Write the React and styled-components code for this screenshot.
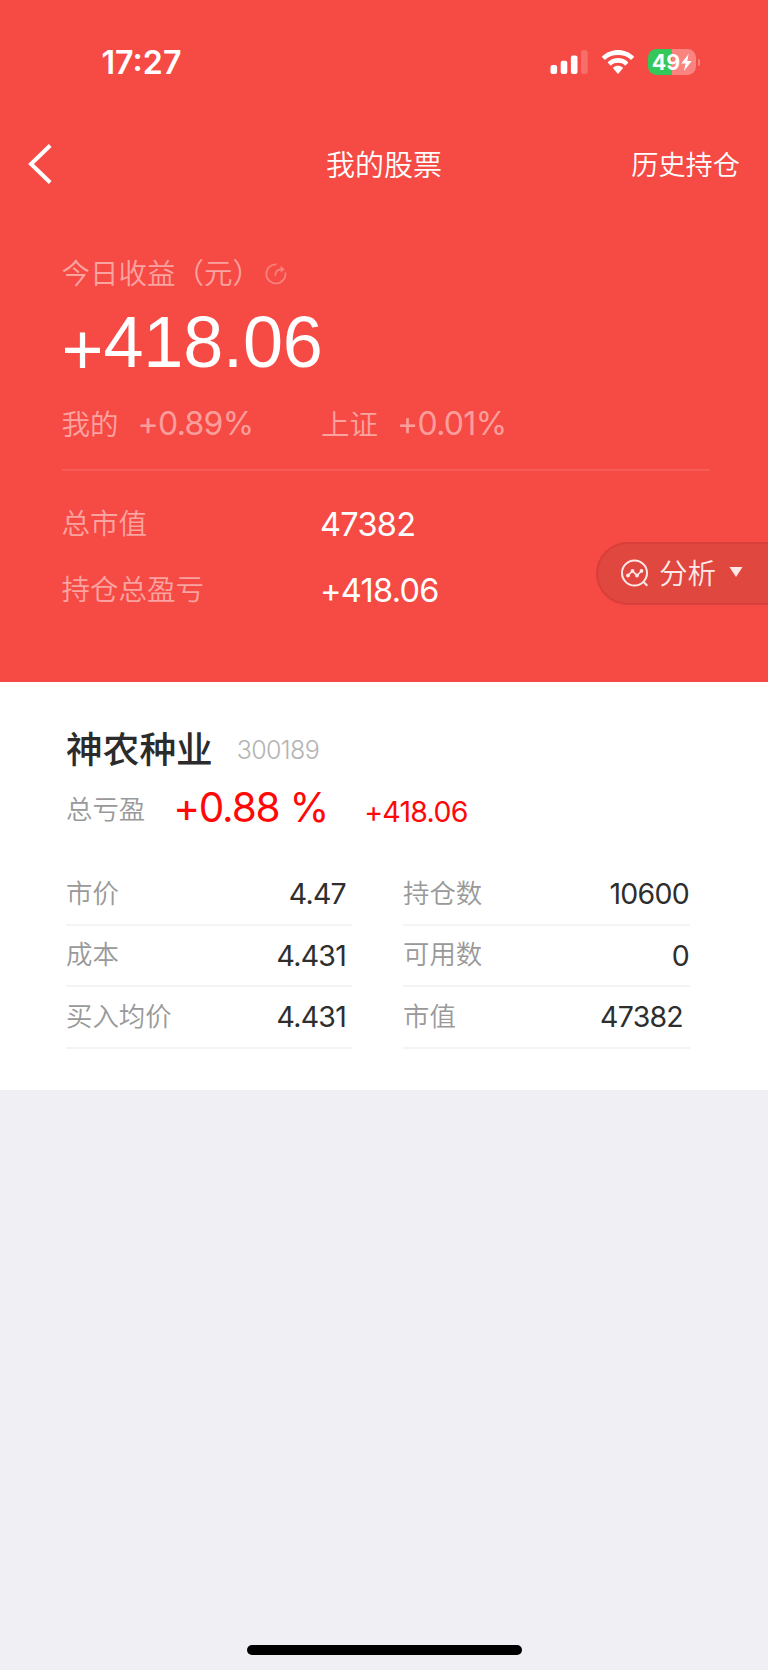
import styled, { createGlobalStyle } from "styled-components";

const cjk = `"Noto Sans CJK SC", sans-serif`;
const latin = `Inter, "Noto Sans CJK SC", sans-serif`;

const GlobalStyle = createGlobalStyle`
  * {
    box-sizing: border-box;
  }
  body {
    margin: 0;
    background-color: #efeff4;
    -webkit-font-smoothing: antialiased;
  }
`;

const Screen = styled.div`
  display: flex;
  flex-direction: column;
  width: 768px;
  height: 1670px;
  background-color: #efeff4;
  font-family: ${latin};
`;

const Header = styled.header`
  position: relative;
  height: 682px;
  background-color: #f64a45;
  color: white;
`;

const StatusBar = styled.div`
  display: flex;
  align-items: center;
  justify-content: space-between;
  height: 124px;
  padding: 0 68px 0 101.5px;
`;

const Time = styled.div`
  padding-top: 1px;
  font-size: 32.2px;
  font-weight: 600;
`;

const StatusIcons = styled.div`
  display: flex;
  align-items: center;
`;

const SignalIcon = styled.svg`
  margin-right: 14px;
`;

const WifiIcon = styled.svg`
  margin-right: 14px;
`;

const Battery = styled.div`
  display: flex;
  align-items: center;
  justify-content: center;
  gap: 1px;
  width: 48px;
  height: 26px;
  border-radius: 8.5px;
  background: linear-gradient(to right, #34c759 50%, #fa8480 50%);
  font-size: 21.5px;
  font-weight: 700;
  line-height: 26px;
`;

const BatteryTip = styled.div`
  width: 2px;
  height: 7px;
  margin-left: 2px;
  border-radius: 0 2px 2px 0;
  background-color: #fa8480;
`;

const NavBar = styled.nav`
  display: grid;
  grid-template-columns: 1fr auto 1fr;
  align-items: center;
  height: 79px;
  padding: 0 28px;
  font-family: ${cjk};
`;

const Title = styled.h1`
  margin: 0;
  padding-bottom: 1px;
  font-size: 29px;
  font-weight: 350;
  line-height: 40px;
`;

const HistoryLink = styled.div`
  justify-self: end;
  padding-bottom: 1px;
  font-size: 27.2px;
  font-weight: 350;
  line-height: 40px;
`;

const Summary = styled.section`
  padding: 49px 58px 0 61.5px;
`;

const SummaryLabel = styled.div`
  padding-bottom: ${(props) => props.$lift || 0}px;
  color: rgba(255, 255, 255, 0.5);
  font-family: ${cjk};
  font-size: 28.5px;
  font-weight: 350;
  line-height: 40px;
`;

const TodayRow = styled.div`
  display: flex;
  align-items: center;
  height: 40px;
`;

const RefreshIcon = styled.svg`
  margin: 4px 0 0 4px;
`;

const TodayProfit = styled.div`
  height: 99px;
  font-family: "Liberation Sans", Arial, sans-serif;
  font-size: 72px;
  line-height: 101px;
  letter-spacing: -0.15px;
`;

const BigPlus = styled.span`
  vertical-align: -7px;
  line-height: 1;
`;

const Columns = styled.div`
  display: grid;
  grid-template-columns: 259.5px 1fr;
  align-items: center;
  height: ${(props) => props.$height}px;
`;

const Rate = styled.div`
  display: flex;
  align-items: center;
  gap: 19px;
`;

// keeps the plus sign at its low position next to digits
const Figure = styled.span`
  font-variant-ligatures: no-contextual;
  font-feature-settings: "calt" 0;
`;

const RateValue = styled(Figure)`
  color: rgba(255, 255, 255, 0.48);
  font-size: 32px;
  letter-spacing: -0.7px;
`;

const Divider = styled.div`
  height: 2px;
  margin: 13.5px 0 21.5px;
  background-color: #f85c57;
`;

const SummaryValue = styled(Figure)`
  margin-left: -1px;
  font-size: 32.5px;
  letter-spacing: -0.7px;
`;

const AnalysisButton = styled.div`
  position: absolute;
  top: 542px;
  right: 0;
  display: flex;
  align-items: center;
  width: 172px;
  height: 63px;
  padding-left: 22px;
  border: 2px solid #d83f3b;
  border-right: 0;
  border-radius: 31.5px 0 0 31.5px;
  background-color: #df473f;
`;

const AnalysisText = styled.span`
  margin: 0 13px 4px 9px;
  color: rgba(255, 255, 255, 0.9);
  font-family: ${cjk};
  font-size: 28.6px;
  font-weight: 350;
  line-height: 40px;
`;

const Card = styled.section`
  height: 408px;
  padding: 43px 78px 0 66px;
  background-color: white;
`;

const NameRow = styled.div`
  display: flex;
  align-items: center;
  height: 44px;
`;

const StockName = styled.h2`
  margin: 0 24px 0 0;
  color: #2b2b2b;
  font-family: ${cjk};
  font-size: 36.7px;
  font-weight: 500;
  line-height: 44px;
`;

const StockCode = styled(Figure)`
  padding-top: 6px;
  color: #b4b4b4;
  font-size: 25px;
  font-weight: 300;
  letter-spacing: -0.65px;
`;

const TotalRow = styled.div`
  display: flex;
  align-items: center;
  height: 75px;
  color: #fe0808;
`;

const GrayLabel = styled.span`
  padding-bottom: ${(props) => props.$lift || 0}px;
  padding-top: ${(props) => props.$drop || 0}px;
  color: #999;
  font-family: ${cjk};
  font-size: 26.4px;
  font-weight: 350;
  line-height: 40px;
`;

const TotalPercent = styled(Figure)`
  margin: 0 36px 0 28px;
  padding-top: 2px;
  font-size: 40.5px;
  letter-spacing: -1.2px;
`;

const TotalAmount = styled(Figure)`
  padding-top: 9px;
  font-size: 28.5px;
  letter-spacing: -0.7px;
`;

const Details = styled.div`
  display: grid;
  grid-template-columns: 286px 287px;
  justify-content: space-between;
  margin-top: 20px;
`;

const DetailRow = styled.div`
  display: flex;
  align-items: center;
  justify-content: space-between;
  height: 61.6px;
  padding-right: ${(props) => props.$inset}px;
  border-bottom: 2px solid #f4f4f4;
`;

const DetailValue = styled(Figure)`
  color: #2e2e2e;
  font-size: 28.5px;
  letter-spacing: -0.75px;
`;

const HomeIndicator = styled.div`
  width: 275px;
  height: 10px;
  margin: auto 0 15.5px 246.5px;
  border-radius: 5px;
  background-color: black;
`;

const details = [
  { label: "市价", value: "4.47", inset: 6 },
  { label: "持仓数", value: "10600", inset: 1 },
  { label: "成本", value: "4.431", inset: 6 },
  { label: "可用数", value: "0", inset: 1 },
  { label: "买入均价", value: "4.431", inset: 6 },
  { label: "市值", value: "47382", inset: 7 },
];

const Signal = () => (
  <SignalIcon width="38" height="24" viewBox="0 0 38 24" fill="white">
    <rect x="0.5" y="15" width="6.6" height="9" rx="2" />
    <rect x="10.7" y="10.8" width="6.6" height="13.2" rx="2" />
    <rect x="20.9" y="5.4" width="6.6" height="18.6" rx="2" />
    <rect x="31.1" y="0.2" width="6.6" height="23.8" rx="2" opacity="0.2" />
  </SignalIcon>
);

const Wifi = () => (
  <WifiIcon width="32" height="24" viewBox="0 0 32 24" fill="white">
    <path d="M16 0C9.900 0 4.300 2.400.200 6.300c-.300.300-.300.700 0 1l2.200 2.200c.300.300.700.300 1 0C6.700 6.400 11.100 5 16 5s9.300 1.400 12.600 4.500c.300.300.700.300 1 0l2.200-2.200c.300-.300.300-.700 0-1C27.700 2.400 22.100 0 16 0z" />
    <path d="M16 8c-3.900 0-7.400 1.500-10 3.900-.300.300-.300.700 0 1l2.300 2.300c.300.300.700.300 1 0 1.800-1.600 4.100-2.400 6.700-2.400s4.900.800 6.700 2.400c.300.300.700.300 1 0l2.300-2.300c.300-.300.300-.700 0-1C23.400 9.500 19.900 8 16 8z" />
    <path d="M16 15.800c-1.900 0-3.500.600-4.700 1.600-.300.300-.300.700 0 1l4.200 5.200c.300.300.700.300 1 0l4.200-5.200c.300-.300.300-.700 0-1-1.200-1-2.800-1.600-4.700-1.600z" />
  </WifiIcon>
);

const App = () => {
  return (
    <>
      <GlobalStyle />
      <Screen>
        <Header>
          <StatusBar>
            <Time>17:27</Time>
            <StatusIcons>
              <Signal />
              <Wifi />
              <Battery>
                49
                <svg width="11" height="17" viewBox="0 0 11 17" fill="white">
                  <path d="M7.600 0 0.300 9.400h4.300L3 17l7.700-9.900H6.300z" />
                </svg>
              </Battery>
              <BatteryTip />
            </StatusIcons>
          </StatusBar>
          <NavBar>
            <svg width="24" height="40" viewBox="0 0 24 40" fill="none">
              <path d="M22.200 1.500 3 20l19.200 18.500" stroke="white" strokeWidth="4" />
            </svg>
            <Title>我的股票</Title>
            <HistoryLink>历史持仓</HistoryLink>
          </NavBar>
          <Summary>
            <TodayRow>
              <SummaryLabel $lift={1}>今日收益（元）</SummaryLabel>
              <RefreshIcon
                width="22"
                height="22"
                viewBox="0 0 22 22"
                fill="none"
                stroke="white"
                strokeWidth="1.7"
                opacity="0.3"
              >
                <path d="M11.500 1.300A9.600 9.600 0 1 0 20.400 9.500" />
                <path d="M10.300 12.800c0-4 2.300-6.500 6.800-6.600" />
                <path d="M15.900 3.300 19.500 6.300l-3.600 3z" fill="white" strokeWidth="0.5" />
              </RefreshIcon>
            </TodayRow>
            <TodayProfit>
              <BigPlus>+</BigPlus>418.06
            </TodayProfit>
            <Columns $height={64}>
              <Rate>
                <SummaryLabel>我的</SummaryLabel>
                <RateValue>+0.89%</RateValue>
              </Rate>
              <Rate>
                <SummaryLabel>上证</SummaryLabel>
                <RateValue>+0.01%</RateValue>
              </Rate>
            </Columns>
            <Divider />
            <Columns $height={65.5}>
              <SummaryLabel $lift={6}>总市值</SummaryLabel>
              <SummaryValue>47382</SummaryValue>
            </Columns>
            <Columns $height={65.5}>
              <SummaryLabel $lift={5}>持仓总盈亏</SummaryLabel>
              <SummaryValue>+418.06</SummaryValue>
            </Columns>
          </Summary>
          <AnalysisButton>
            <svg width="30" height="30" viewBox="0 0 30 30" fill="none" stroke="#fde8e7" strokeWidth="2">
              <circle cx="14.500" cy="14" r="12.500" />
              <path d="M23 22.500l4.300 4.300" />
              <path d="M8 16.500l4.500-4.500 4.500 4.500 4.500-4.500" strokeWidth="1.700" />
              <g fill="#fde8e7" stroke="none">
                <circle cx="8" cy="16.500" r="1.900" />
                <circle cx="12.500" cy="11.900" r="1.900" />
                <circle cx="17" cy="16.500" r="1.900" />
                <circle cx="21.500" cy="11.900" r="1.900" />
              </g>
            </svg>
            <AnalysisText>分析</AnalysisText>
            <svg width="14" height="13" viewBox="0 0 14 13" fill="#fde8e7">
              <path d="M0.500 0h13L7 10z" />
            </svg>
          </AnalysisButton>
        </Header>
        <Card>
          <NameRow>
            <StockName>神农种业</StockName>
            <StockCode>300189</StockCode>
          </NameRow>
          <TotalRow>
            <GrayLabel $drop={2}>总亏盈</GrayLabel>
            <TotalPercent>+0.88 %</TotalPercent>
            <TotalAmount>+418.06</TotalAmount>
          </TotalRow>
          <Details>
            {details.map((item) => (
              <DetailRow key={item.label} $inset={item.inset}>
                <GrayLabel $lift={4.5}>{item.label}</GrayLabel>
                <DetailValue>{item.value}</DetailValue>
              </DetailRow>
            ))}
          </Details>
        </Card>
        <HomeIndicator />
      </Screen>
    </>
  );
};

export default App;
